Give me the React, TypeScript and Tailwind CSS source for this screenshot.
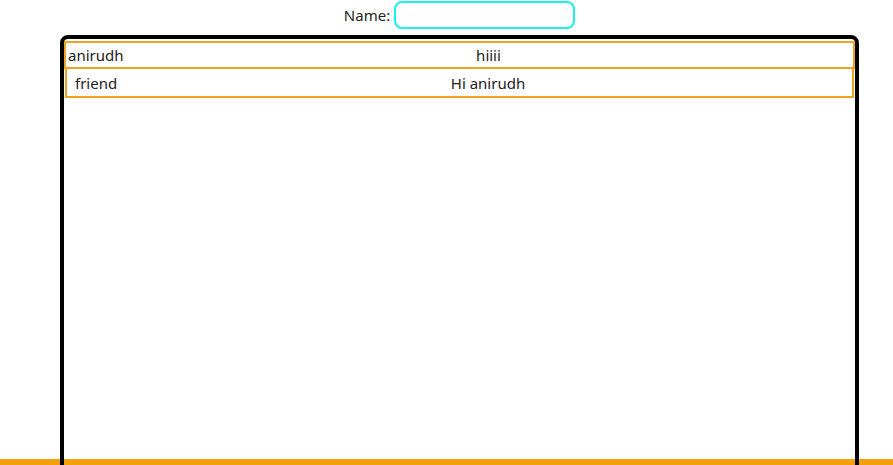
const messages = [
    { name: 'anirudh', text: 'hiiii', pad: 'pl-[2px]' },
    { name: 'friend', text: 'Hi anirudh', pad: 'pl-[8px]' },
];

export default function App() {
    return (
        <div
            className="relative h-[465px] overflow-hidden bg-white text-[15px] text-[#222]"
            style={{ fontFamily: '"Noto Sans", "Open Sans", sans-serif' }}
        >
            <div className="relative z-10 ml-[60px] w-[799px]">
                <div className="flex h-[35px] items-start justify-center gap-[5px] pt-px">
                    <label className="mt-[4px] leading-5">Name:</label>
                    <input className="-ml-px h-[28px] w-[181px] rounded-[8px] border-2 border-[#1af0f0] px-2 outline-none" />
                </div>
                <div className="h-[460px] rounded-[8px] border-4 border-black pt-[2px]">
                    {messages.map((m, i) => (
                        <div
                            key={m.name}
                            className={
                                i === 0
                                    ? 'grid h-[28px] grid-cols-[58px_1fr] items-center border-2 border-[#f0a21e]'
                                    : 'mx-px grid h-[29px] grid-cols-[57px_1fr] items-center border-2 border-t-0 border-[#f0a21e] pt-px'
                            }
                        >
                            <span className={m.pad}>{m.name}</span>
                            <span className="text-center">{m.text}</span>
                        </div>
                    ))}
                </div>
            </div>
            <div className="absolute bottom-0 left-0 h-[6px] w-full bg-[#f5a00a]" />
        </div>
    );
}
